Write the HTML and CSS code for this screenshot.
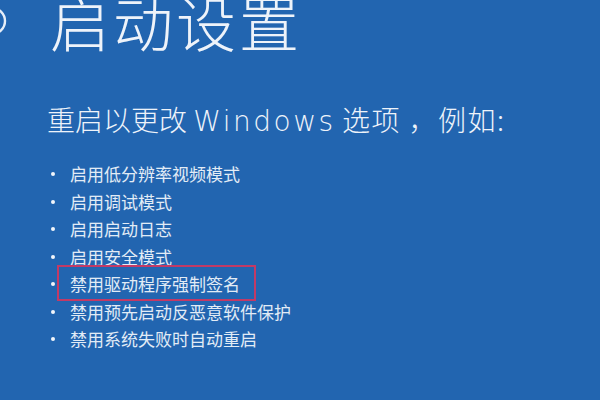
FILE: index.html
```html
<!DOCTYPE html>
<html lang="zh-CN">
<head>
<meta charset="utf-8">
<title>启动设置</title>
<link rel="stylesheet" href="styles.css">
</head>
<body>
<div class="screen">
  <header class="head">
    <svg class="back" width="40" height="40" viewBox="0 0 40 40"><circle cx="14" cy="20" r="13" fill="none" stroke="#e6eef8" stroke-width="2.4"/></svg>
    <h1 class="title">启动设置</h1>
  </header>
  <p class="lead">重启以更改 <span class="latin">Windows</span> <span class="tail">选项 ，例如:</span></p>
  <ul class="opts">
    <li>启用低分辨率视频模式</li>
    <li>启用调试模式</li>
    <li>启用启动日志</li>
    <li>启用安全模式</li>
    <li class="mark">禁用驱动程序强制签名</li>
    <li>禁用预先启动反恶意软件保护</li>
    <li>禁用系统失败时自动重启</li>
  </ul>
</div>
</body>
</html>
```
FILE: styles.css
```css
html, body {
  margin: 0;
  padding: 0;
  width: 600px;
  height: 400px;
  overflow: hidden;
  background: #2265b0;
}
.screen {
  width: 600px;
  height: 400px;
  font-family: "Noto Sans CJK SC", "Noto Sans", sans-serif;
  color: #eef3fa;
}
.head {
  display: flex;
  align-items: center;
  margin-top: -11px;
  height: 64px;
}
.back {
  margin-left: -22px;
  margin-right: 32px;
  flex: none;
}
.title {
  margin: 0;
  font-size: 60px;
  line-height: 64px;
  font-weight: 300;
  letter-spacing: 3px;
}
.lead {
  margin: 48px 0 0 47px;
  font-size: 28px;
  line-height: 36px;
  font-weight: 300;
}
.latin {
  font-family: "DejaVu Sans", "Noto Sans", sans-serif;
  letter-spacing: 2.5px;
}
.tail {
  letter-spacing: 1.5px;
}
.opts {
  list-style: none;
  margin: 20px 0 0 48px;
  padding: 0;
}
.opts li {
  position: relative;
  padding-left: 22px;
  font-size: 17px;
  line-height: 27.5px;
  height: 27.5px;
  color: #e2ecf6;
}
.opts li::before {
  content: "";
  position: absolute;
  left: 3px;
  top: 12px;
  width: 4px;
  height: 4px;
  border-radius: 50%;
  background: #f2f6fb;
}
.opts li.mark::after {
  content: "";
  position: absolute;
  left: 9px;
  top: -5px;
  width: 195px;
  height: 32px;
  border: 2px solid #c23a66;
}
```
